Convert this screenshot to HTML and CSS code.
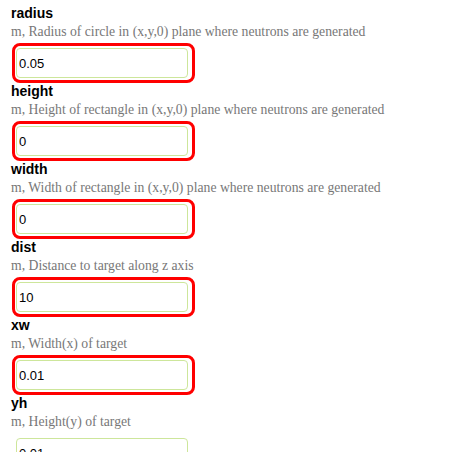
FILE: index.html
```html
<!DOCTYPE html>
<html>
<head>
<meta charset="utf-8">
<link rel="stylesheet" href="styles.css">
</head>
<body>
<div class="form">
  <div class="field">
    <div class="label">radius</div>
    <div class="desc">m, Radius of circle in (x,y,0) plane where neutrons are generated</div>
    <div class="wrap invalid"><input class="inp" type="text" value="0.05"></div>
  </div>
  <div class="field">
    <div class="label">height</div>
    <div class="desc">m, Height of rectangle in (x,y,0) plane where neutrons are generated</div>
    <div class="wrap invalid"><input class="inp" type="text" value="0"></div>
  </div>
  <div class="field">
    <div class="label">width</div>
    <div class="desc">m, Width of rectangle in (x,y,0) plane where neutrons are generated</div>
    <div class="wrap invalid"><input class="inp" type="text" value="0"></div>
  </div>
  <div class="field">
    <div class="label">dist</div>
    <div class="desc">m, Distance to target along z axis</div>
    <div class="wrap invalid"><input class="inp" type="text" value="10"></div>
  </div>
  <div class="field">
    <div class="label">xw</div>
    <div class="desc">m, Width(x) of target</div>
    <div class="wrap invalid"><input class="inp" type="text" value="0.01"></div>
  </div>
  <div class="field">
    <div class="label">yh</div>
    <div class="desc">m, Height(y) of target</div>
    <div class="wrap"><input class="inp" type="text" value="0.01"></div>
  </div>
</div>
</body>
</html>
```
FILE: styles.css
```css
html, body {
  margin: 0;
  padding: 0;
  background: #ffffff;
  overflow: hidden;
}
.form {
  padding: 5px 0 0 11px;
}
.field {
  height: 78px;
}
.label {
  font-family: "Liberation Sans", Arial, sans-serif;
  font-weight: bold;
  font-size: 14px;
  line-height: 17px;
  color: #000;
}
.desc {
  font-family: "Liberation Serif", "Times New Roman", serif;
  font-size: 13.7px;
  line-height: 20px;
  color: #777777;
}
.wrap {
  display: block;
  width: max-content;
  margin-left: 1px;
  margin-top: 1px;
  border: 3px solid transparent;
  border-radius: 8px;
  padding: 2px 4px 2px 1px;
}
.wrap.invalid {
  border-color: #ff0000;
}
.inp {
  display: block;
  box-sizing: border-box;
  width: 172px;
  height: 30px;
  margin: 0;
  padding: 0 0 0 2px;
  border: 1px solid #cde69b;
  border-radius: 4px;
  font-family: "Liberation Sans", Arial, sans-serif;
  font-size: 13px;
  color: #000;
  background: #fff;
  outline: none;
}
```
